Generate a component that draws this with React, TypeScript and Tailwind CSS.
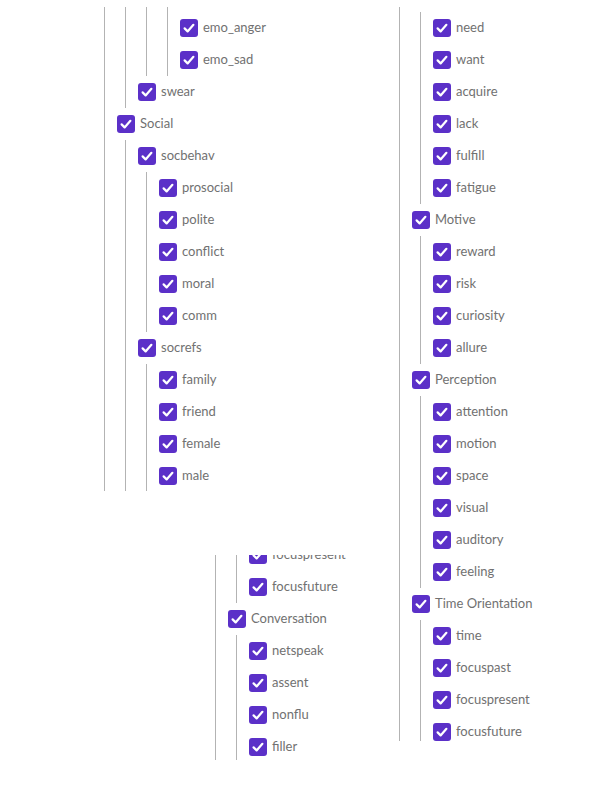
type Node = { label: string; children?: Node[] };

const leaf = (...labels: string[]): Node[] => labels.map((label) => ({ label }));

const psychTree: Node = {
  label: 'Psychological Processes',
  children: [
    {
      label: 'Affect',
      children: [
        ...leaf('tone_pos', 'tone_neg'),
        {
          label: 'emotion',
          children: [
            { label: 'emo_pos' },
            { label: 'emo_neg', children: leaf('emo_anx', 'emo_anger', 'emo_sad') },
          ],
        },
        { label: 'swear' },
      ],
    },
    {
      label: 'Social',
      children: [
        { label: 'socbehav', children: leaf('prosocial', 'polite', 'conflict', 'moral', 'comm') },
        { label: 'socrefs', children: leaf('family', 'friend', 'female', 'male') },
      ],
    },
  ],
};

const expandedTree: Node = {
  label: 'Expanded Dictionary',
  children: [
    { label: 'States', children: leaf('need', 'want', 'acquire', 'lack', 'fulfill', 'fatigue') },
    { label: 'Motive', children: leaf('reward', 'risk', 'curiosity', 'allure') },
    {
      label: 'Perception',
      children: leaf('attention', 'motion', 'space', 'visual', 'auditory', 'feeling'),
    },
    {
      label: 'Time Orientation',
      children: leaf('time', 'focuspast', 'focuspresent', 'focusfuture'),
    },
    { label: 'Conversation', children: leaf('netspeak', 'assent', 'nonflu', 'filler') },
  ],
};

function Checkbox() {
  return (
    <span className="flex h-[18px] w-[18px] shrink-0 items-center justify-center rounded-[3px] bg-[#5b30c8]">
      <svg width="18" height="18" viewBox="0 0 18 18" fill="none">
        <path
          d="M4.6 9.4 L7.6 12.4 L13.4 5.8"
          stroke="white"
          strokeWidth="2.2"
          strokeLinecap="round"
          strokeLinejoin="round"
        />
      </svg>
    </span>
  );
}

function TreeItem({ node }: { node: Node }) {
  return (
    <div>
      <div className="flex h-[32px] items-center whitespace-nowrap">
        <Checkbox />
        <span className="ml-[5px] text-[13px] text-[#717171]">{node.label}</span>
      </div>
      {node.children && (
        <div className="ml-[8px] border-l border-[#b3b3b3] pl-[12px]">
          {node.children.map((child) => (
            <TreeItem key={child.label} node={child} />
          ))}
        </div>
      )}
    </div>
  );
}

function TreePanel({ node, className, offset }: { node: Node; className: string; offset: string }) {
  return (
    <div className={`overflow-hidden ${className}`}>
      <div className={offset}>
        <TreeItem node={node} />
      </div>
    </div>
  );
}

export default function App() {
  return (
    <div
      className="flex h-[785px] w-[611px] items-start overflow-hidden bg-white"
      style={{ fontFamily: 'Lato, "Open Sans", sans-serif' }}
    >
      {/* Left column */}
      <div className="flex w-[391px] shrink-0 flex-col">
        <TreePanel
          node={psychTree}
          className="ml-[96px] mt-[7px] h-[484px] w-[295px]"
          offset="-mt-[251px]"
        />
        <TreePanel
          node={expandedTree}
          className="ml-[207px] mt-[64px] h-[205px] w-[184px]"
          offset="-mt-[752px]"
        />
      </div>

      {/* Right column */}
      <TreePanel node={expandedTree} className="mt-[7px] h-[734px] flex-1" offset="-mt-[59px]" />
    </div>
  );
}
